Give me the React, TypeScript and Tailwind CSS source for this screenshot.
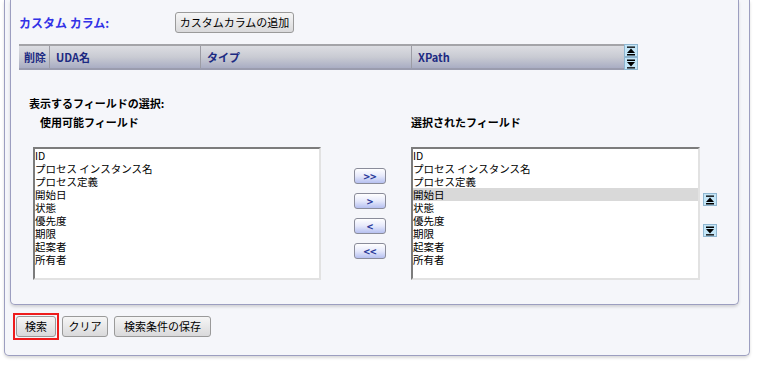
import React from "react";

// fields shown in both list boxes
const fields = [
  "ID",
  "プロセス インスタンス名",
  "プロセス定義",
  "開始日",
  "状態",
  "優先度",
  "期限",
  "起案者",
  "所有者",
];

const font = "font-['MS_UI_Gothic','Noto_Sans_CJK_JP',sans-serif]";

// small gray push button
const GrayButton: React.FC<{ label: string; className?: string }> = ({ label, className = "" }) => (
  <button
    className={`h-[21px] rounded-[3px] border border-[#9a9a9a] bg-gradient-to-b from-[#f6f6f6] to-[#d9d9db] text-[11px] text-black leading-none ${className}`}
  >
    {label}
  </button>
);

// blue move buttons between the list boxes
const MoveButton: React.FC<{ label: string }> = ({ label }) => (
  <button className="h-[16px] w-[32px] rounded-[3px] border border-[#8a8c9a] bg-gradient-to-b from-[#ffffff] via-[#e6e9fb] to-[#b6c0f0] text-[11px] font-bold leading-none text-[#2a3a9a]">
    {label}
  </button>
);

// light blue up/down arrow icon button
const ArrowBox: React.FC<{ dir: "up" | "down" }> = ({ dir }) => (
  <div className="flex h-[13px] w-[14px] items-center justify-center border border-[#8fb6d0] bg-[#c4e6f8]">
    <svg width="10" height="10" viewBox="0 0 10 10">
      {dir === "up" ? (
        <>
          <rect x="1" y="0.5" width="8" height="1.3" fill="#000" />
          <polygon points="5,2.5 9,7 1,7" fill="#000" />
          <rect x="1" y="8" width="8" height="1.5" fill="#000" />
        </>
      ) : (
        <>
          <rect x="1" y="0.5" width="8" height="1.5" fill="#000" />
          <polygon points="1,3 9,3 5,7.5" fill="#000" />
          <rect x="1" y="8.2" width="8" height="1.3" fill="#000" />
        </>
      )}
    </svg>
  </div>
);

const ListBox: React.FC<{ width: string; selected?: number }> = ({ width, selected }) => (
  <div
    className={`${width} h-[133px] border-2 border-t-[#7c7c7c] border-l-[#7c7c7c] border-r-[#e2e2e2] border-b-[#e2e2e2] bg-white`}
  >
    {fields.map((f, i) => (
      <div
        key={f}
        className={`h-[13px] pl-[0px] text-[10.5px] leading-[13px] text-black whitespace-nowrap ${
          i === selected ? "bg-[#d9d9d9]" : ""
        }`}
      >
        {f}
      </div>
    ))}
  </div>
);

export default function App() {
  return (
    <div className={`h-[366px] w-[759px] overflow-hidden bg-white ${font}`}>
      {/* outer panel */}
      <div className="ml-[4px] h-[356px] w-[746px] rounded-b-[5px] border-x border-b border-[#9c9ec0] bg-[#f5f6fa] pl-[5px] shadow-[0_2px_3px_rgba(0,0,0,0.15)]">
        {/* inner panel */}
        <div className="h-[305px] w-[729px] rounded-b-[5px] border-x border-b border-[#9c9ec0] bg-[#f5f6fa] pl-[8px] shadow-[0_2px_3px_rgba(0,0,0,0.15)]">
          {/* custom columns */}
          <div className="flex items-center pt-[12px]">
            <div className="w-[156px] text-[12px] font-bold text-[#3232e6]">カスタム カラム:</div>
            <GrayButton label="カスタムカラムの追加" className="w-[119px]" />
          </div>

          <div className="mt-[11px] flex items-start">
            <div className="flex h-[26px] w-[605px] items-center border-t-2 border-b-2 border-t-[#a4a4a8] border-b-[#9a9cae] bg-gradient-to-b from-[#dcdde2] via-[#c9cbd3] to-[#a9adc3] text-[11px] font-bold text-[#1c2a82]">
              <div className="flex h-full w-[31px] items-center border-r border-[#9c9ca4] pl-[5px]">削除</div>
              <div className="flex h-full w-[151px] items-center border-r border-[#9c9ca4] pl-[6px]">UDA名</div>
              <div className="flex h-full w-[211px] items-center border-r border-[#9c9ca4] pl-[6px]">タイプ</div>
              <div className="flex h-full flex-1 items-center pl-[6px]">XPath</div>
            </div>
            <div className="flex flex-col">
              <ArrowBox dir="up" />
              <ArrowBox dir="down" />
            </div>
          </div>

          {/* field selection */}
          <div className="ml-[10px] mt-[26px] h-[14px] text-[11px] font-bold leading-[14px] text-black">
            表示するフィールドの選択:
          </div>
          <div className="mt-[5px] flex h-[14px] text-[11px] font-bold leading-[14px] text-black">
            <div className="ml-[21px] w-[371px]">使用可能フィールド</div>
            <div>選択されたフィールド</div>
          </div>

          <div className="mt-[18px] flex items-start">
            <div className="ml-[14px]">
              <ListBox width="w-[288px]" />
            </div>
            <div className="ml-[33px] mt-[21px] flex flex-col gap-[9px]">
              <MoveButton label=">>" />
              <MoveButton label=">" />
              <MoveButton label="<" />
              <MoveButton label="<<" />
            </div>
            <div className="ml-[25px]">
              <ListBox width="w-[289px]" selected={3} />
            </div>
            <div className="ml-[3px] mt-[46px] flex flex-col gap-[18px]">
              <ArrowBox dir="up" />
              <ArrowBox dir="down" />
            </div>
          </div>
        </div>

        {/* bottom buttons */}
        <div className="mt-[8px] flex items-center pl-[3px]">
          <div className="border-2 border-[#ee1c1c] p-[1px]">
            <GrayButton label="検索" className="block w-[40px]" />
          </div>
          <GrayButton label="クリア" className="ml-[3px] w-[46px]" />
          <GrayButton label="検索条件の保存" className="ml-[6px] w-[97px]" />
        </div>
      </div>
    </div>
  );
}
